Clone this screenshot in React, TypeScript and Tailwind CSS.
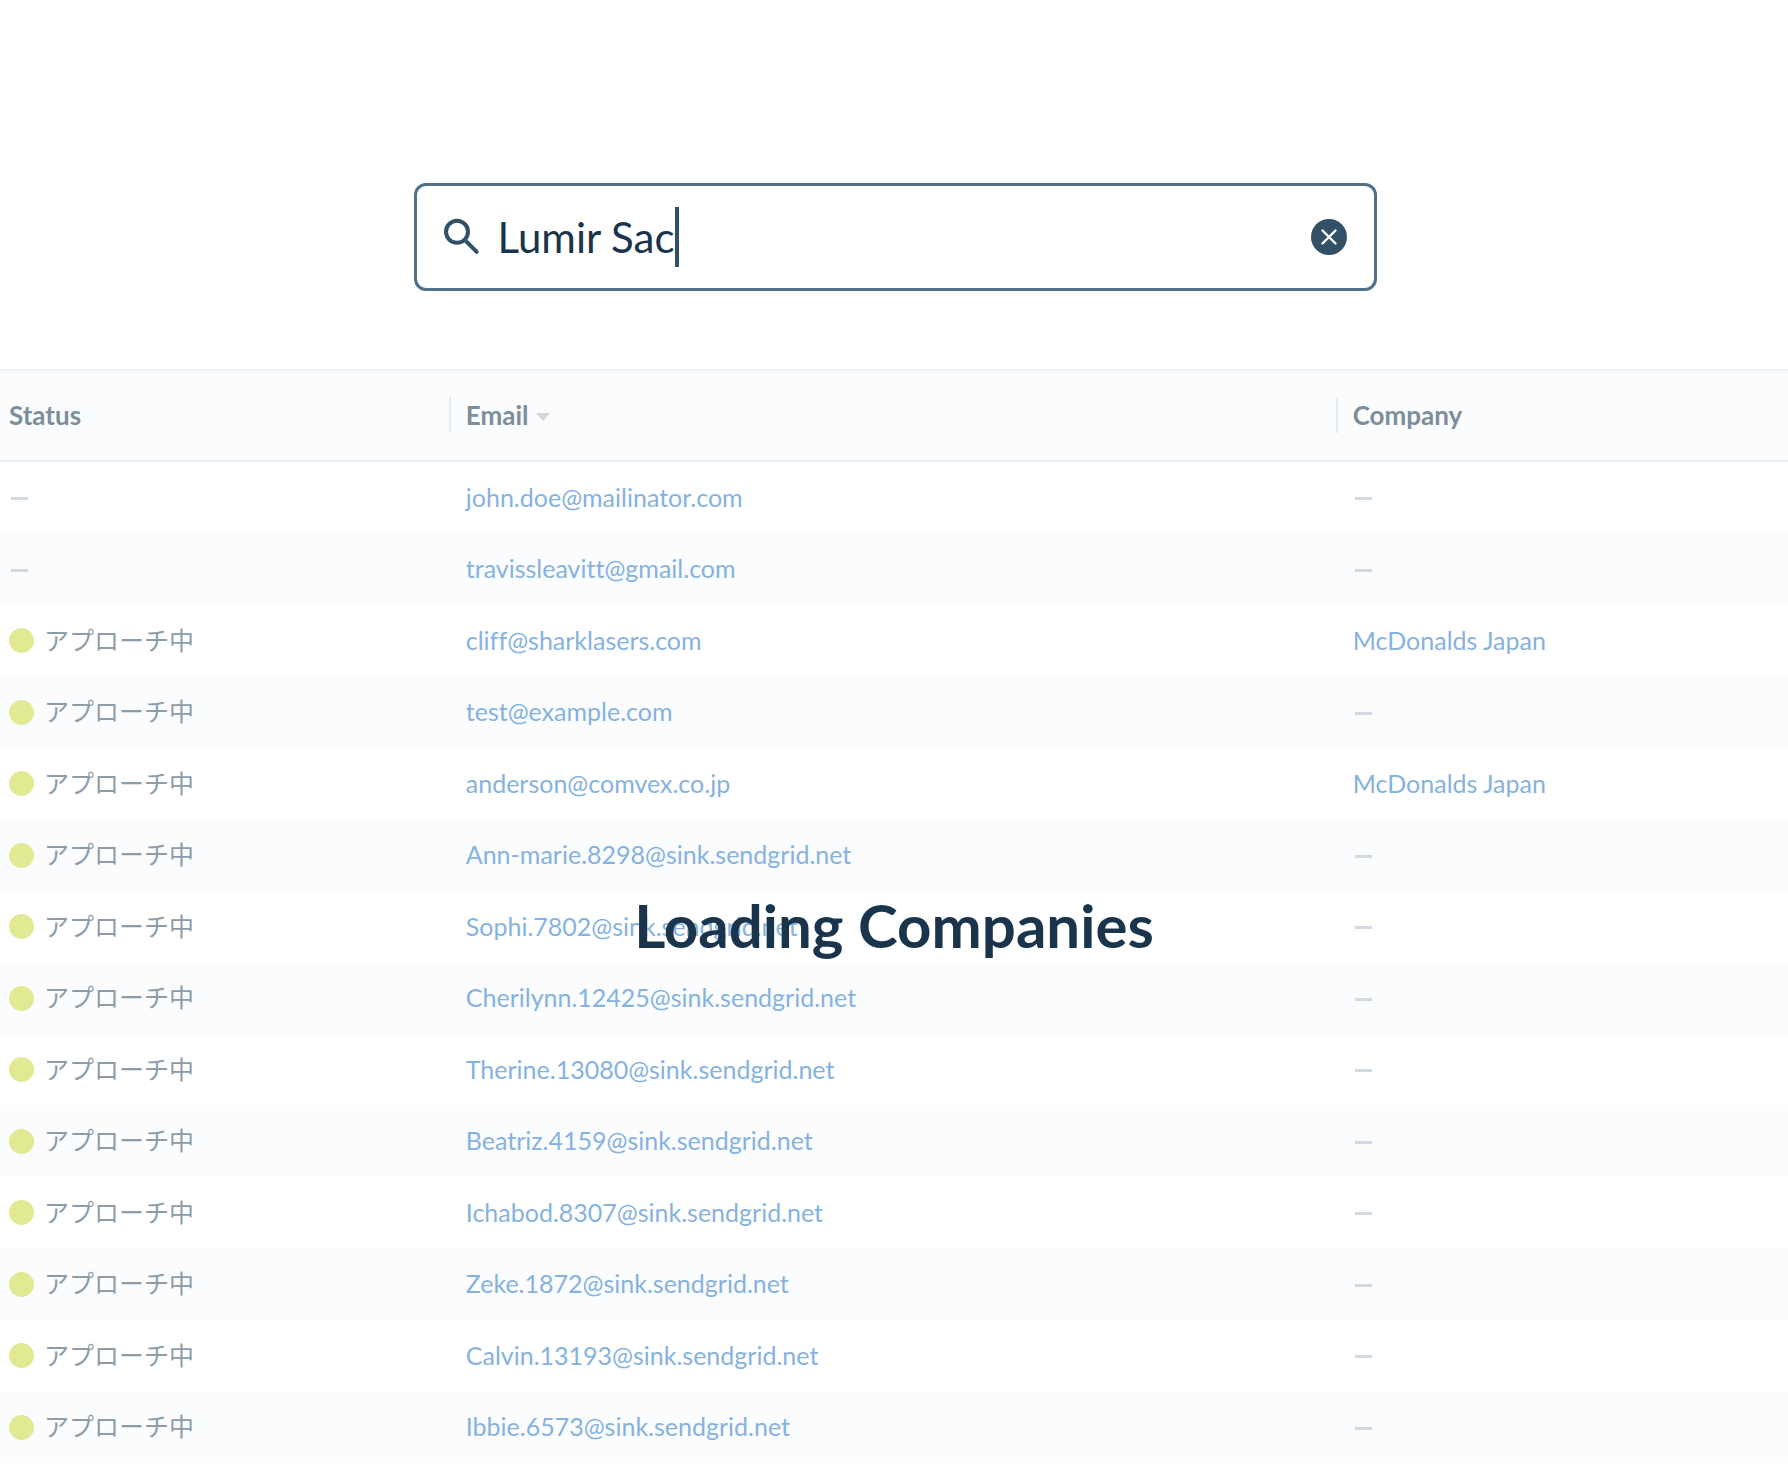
import { useState } from "react";

type Contact = { status?: string; email: string; company?: string };

const APPROACHING = "アプローチ中";

const contacts: Contact[] = [
  { email: "john.doe@mailinator.com" },
  { email: "travissleavitt@gmail.com" },
  { status: APPROACHING, email: "cliff@sharklasers.com", company: "McDonalds Japan" },
  { status: APPROACHING, email: "test@example.com" },
  { status: APPROACHING, email: "anderson@comvex.co.jp", company: "McDonalds Japan" },
  { status: APPROACHING, email: "Ann-marie.8298@sink.sendgrid.net" },
  { status: APPROACHING, email: "Sophi.7802@sink.sendgrid.net" },
  { status: APPROACHING, email: "Cherilynn.12425@sink.sendgrid.net" },
  { status: APPROACHING, email: "Therine.13080@sink.sendgrid.net" },
  { status: APPROACHING, email: "Beatriz.4159@sink.sendgrid.net" },
  { status: APPROACHING, email: "Ichabod.8307@sink.sendgrid.net" },
  { status: APPROACHING, email: "Zeke.1872@sink.sendgrid.net" },
  { status: APPROACHING, email: "Calvin.13193@sink.sendgrid.net" },
  { status: APPROACHING, email: "Ibbie.6573@sink.sendgrid.net" },
];

function SearchIcon() {
  return (
    <svg
      viewBox="0 0 24 24"
      className="size-12 shrink-0 text-[#335166]"
      fill="none"
      stroke="currentColor"
      strokeWidth="2"
      aria-hidden="true"
    >
      <circle cx="9.5" cy="9.4" r="5.5" />
      <path d="M13.9 14L19 19.1" />
      <path d="M19 19.1l.35.35" strokeLinecap="round" />
    </svg>
  );
}

function Empty() {
  return <div role="img" aria-label="None" className="mt-0.5 ml-0.5 h-[3px] w-[17px] bg-[#d2d9e0]" />;
}

function SearchBox() {
  const [query, setQuery] = useState("Lumir Sac");
  return (
    <form
      role="search"
      className="mx-auto flex h-[108px] w-[54%] items-center rounded-xl border-3 border-[#507188] bg-white pr-[27px] pl-[21px]"
      onSubmit={(e) => e.preventDefault()}
    >
      <label htmlFor="search" className="mr-3" aria-label="Search">
        <SearchIcon />
      </label>
      <input
        id="search"
        type="text"
        value={query}
        onChange={(e) => setQuery(e.target.value)}
        className="field-sizing-content text-[42px] leading-[60px] text-[#19344b] caret-transparent outline-none"
      />
      <span className="h-[60px] w-1 bg-[#335166]" />
      <button
        type="button"
        aria-label="Clear search"
        onClick={() => setQuery("")}
        className="ml-auto size-9 shrink-0 rounded-full bg-[#335166]"
      >
        <svg viewBox="0 0 36 36" className="size-9" fill="none" stroke="#fff" strokeWidth="2.4" strokeLinecap="round" aria-hidden="true">
          <path d="M11.5 11.5l13 13M24.5 11.5l-13 13" />
        </svg>
      </button>
    </form>
  );
}

export default function App() {
  return (
    <main className="min-h-screen bg-white font-['Lato','Noto_Sans_CJK_JP',sans-serif] [font-variant-ligatures:none]">
      <div className="pt-[183px] pb-[78px] pl-[3px]">
        <SearchBox />
      </div>
      <section className="relative">
        <table className="w-full table-fixed border-collapse text-left">
          <thead>
            <tr className="h-[93px] bg-[#fafcfe] text-[26px] leading-9 text-[#7d8e9b] shadow-[inset_0_-2px_0_#e9edf4,inset_0_2px_0_#ecf3f5,inset_0_4px_0_#f4f8fa]">
              <th className="w-[25.1%] p-0 pb-0.5 pl-[9px] font-bold">Status</th>
              <th className="w-[49.6%] p-0 pb-0.5 font-bold">
                <button type="button" className="flex h-9 items-center border-l-2 border-[#e6ebf0] pl-[15px] font-bold">
                  Email
                  <svg viewBox="0 0 14 8" className="mt-1 ml-2 h-2 w-3.5 fill-[#d3d5d8]" aria-hidden="true">
                    <path d="M0 0h14L7 8z" />
                  </svg>
                </button>
              </th>
              <th className="p-0 pb-0.5 font-bold">
                <div className="h-9 border-l-2 border-[#e6ebf0] pl-[15px]">Company</div>
              </th>
            </tr>
          </thead>
          <tbody className="text-[25px] leading-9 text-[#86b2e0]">
            {contacts.map((c) => (
              <tr key={c.email} className="odd:h-[71px] even:h-[72px] even:bg-[#fafcfe]">
                <td className="p-0 pl-[9px]">
                  {c.status ? (
                    <div className="flex items-center gap-2.5 text-[#8d9ca8]">
                      <span className="size-[25px] rounded-full bg-[#e1ea93]" />
                      <span className="pb-0.5">{c.status}</span>
                    </div>
                  ) : (
                    <Empty />
                  )}
                </td>
                <td className="p-0 pl-[17px]">
                  <a href={`mailto:${c.email}`} className="block pb-0.5">
                    {c.email}
                  </a>
                </td>
                <td className="p-0 pl-[17px]">
                  {c.company ? (
                    <a href="#company" className="block pb-0.5">
                      {c.company}
                    </a>
                  ) : (
                    <Empty />
                  )}
                </td>
              </tr>
            ))}
          </tbody>
        </table>
        <div role="status" className="pointer-events-none absolute inset-0 flex items-center justify-center pt-[18px]">
          <p className="text-[60px] leading-[72px] font-bold text-[#19344b]">Loading Companies</p>
        </div>
      </section>
    </main>
  );
}
